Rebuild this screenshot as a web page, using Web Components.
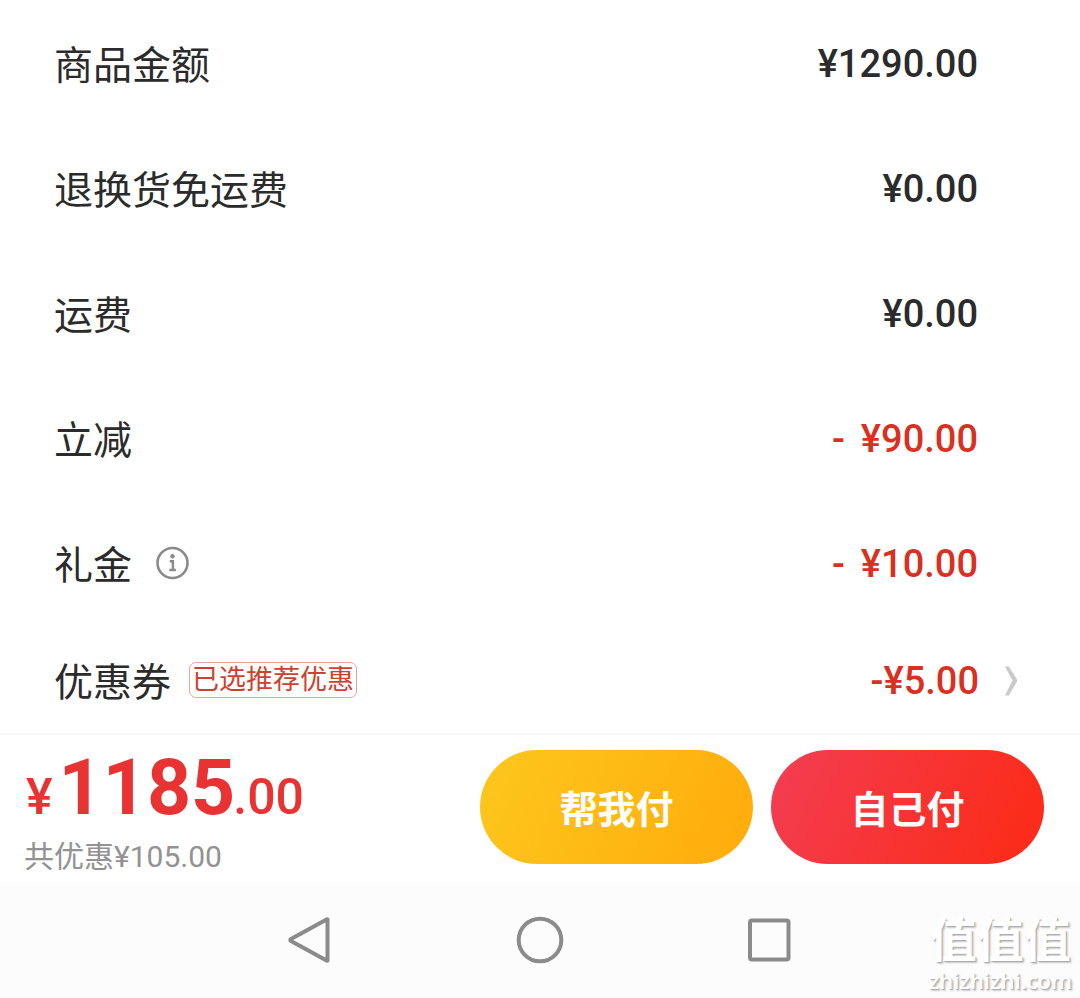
<!DOCTYPE html>
<html lang="zh-CN">
<head>
<meta charset="utf-8">
<meta name="viewport" content="width=device-width, initial-scale=1">
<title>结算</title>
<style>
  body { margin: 0; background: #fff; color: #2b2b2b; font-family: Roboto, "Noto Sans CJK SC", sans-serif; }
</style>
</head>
<body>
<checkout-page></checkout-page>
<script>
function define(name, html) {
  const template = document.createElement('template');
  template.innerHTML = html;
  customElements.define(name, class extends HTMLElement {
    constructor() {
      super();
      this.attachShadow({ mode: 'open' }).append(template.content.cloneNode(true));
    }
  });
}

define('price-row', `
  <style>
    :host { display: flex; align-items: center; height: 125px; padding: 2px 60px 0 54px; box-sizing: border-box; font-size: 39px; line-height: 56px; }
    :host([last]) { height: 108px; padding-top: 4px; }
    .label { display: flex; align-items: center; padding-bottom: 4px; font-family: "Noto Sans CJK SC", sans-serif; }
    .value { display: flex; gap: 16px; margin-left: auto; font-size: 38px; font-weight: 500; }
    :host([discount]) .value { color: #d9301f; }
    .trail { display: flex; justify-content: flex-end; width: 42px; }
    :host([last]) .trail { width: 41px; }
  </style>
  <span class="label"><slot></slot><slot name="extra"></slot></span>
  <span class="value"><slot name="value"></slot></span>
  <span class="trail"><slot name="trail"></slot></span>`);

define('info-button', `
  <style>
    :host { display: block; margin: 2px 0 0 23px; }
    button { display: block; padding: 0; border: 0; background: none; }
    svg { display: block; }
  </style>
  <button type="button" aria-label="礼金说明">
    <svg width="36" height="36" viewBox="0 0 36 36" fill="none" stroke="#8a8a8a">
      <circle cx="17.500" cy="18" r="15" stroke-width="2.6"/>
      <circle cx="17.500" cy="11.3" r="2.2" fill="#8a8a8a" stroke="none"/>
      <path d="M14.800 16.2H17.900V24.5M14.300 25H20.900" stroke-width="2.4"/>
    </svg>
  </button>`);

define('chevron-button', `
  <style>
    :host { display: block; }
    button { display: block; padding: 0; border: 0; background: none; }
    svg { display: block; }
  </style>
  <button type="button" aria-label="选择优惠券">
    <svg width="16" height="32" viewBox="0 0 16 32"><path d="M1 1.500H4.800L13 14.500V16.500L4.800 30.500H1L8.500 15.500Z" fill="#c9c9c9"/></svg>
  </button>`);

define('coupon-tag', `
  <style>
    :host { display: block; padding: 0 2px 4px; margin: 2px 0 0 18px; border: 1px solid #e6a49d; border-radius: 7px; color: #d0402f; font-size: 27px; line-height: 30px; }
  </style>
  <slot></slot>`);

define('pay-button', `
  <style>
    :host { display: block; flex: 0 1 273px; --from: #fdc51c; --to: #ffae0d; }
    :host([kind="self"]) { --from: #f43c4e; --to: #fb2c1b; }
    button { display: block; width: 100%; height: 114px; padding: 0; border: 0; border-radius: 57px; background: linear-gradient(115deg, var(--from) 8%, var(--to) 88%); color: #fff; font: bold 38px/56px "Noto Sans CJK SC", sans-serif; }
  </style>
  <button type="button"><slot></slot></button>`);

define('pay-bar', `
  <style>
    :host { display: flex; align-items: center; gap: 18px; height: 149px; box-sizing: border-box; padding: 0 36px 4px 24px; border-top: 2px solid #f7f7f7; }
    .sum { margin: 6px auto 0 0; white-space: nowrap; }
    .total { display: flex; align-items: baseline; padding-left: 2px; color: #e93333; font-size: 50px; font-weight: 500; line-height: 86px; }
    .total b { margin: 0 -2px 0 6px; font-size: 77px; font-weight: 700; }
    .saved { color: #929292; font-size: 30px; line-height: 34px; }
  </style>
  <div class="sum">
    <div class="total"><span>¥</span><b>1185</b><span>.00</span></div>
    <div class="saved">共优惠¥105.00</div>
  </div>
  <pay-button>帮我付</pay-button>
  <pay-button kind="self">自己付</pay-button>`);

define('system-nav', `
  <style>
    :host { display: grid; grid-template-columns: repeat(3, 1fr); align-items: center; justify-items: center; height: 116px; padding: 0 18%; background: #fcfcfc; }
    button { display: block; padding: 0; border: 0; background: none; }
    svg { display: block; }
  </style>
  <button type="button" aria-label="返回"><svg width="48" height="48" viewBox="0 0 48 48" fill="none" stroke="#8b8b8b" stroke-width="4" stroke-linejoin="round"><path d="M41.500 3.500V44.500Q41.500 45 41 44.800L5 25Q3.500 24 5 23L41 3.200Q41.500 3 41.500 3.500Z"/></svg></button>
  <button type="button" aria-label="主页"><svg width="48" height="48" viewBox="0 0 48 48" fill="none" stroke="#8b8b8b" stroke-width="4"><circle cx="24" cy="24" r="21.300"/></svg></button>
  <button type="button" aria-label="最近任务"><svg width="48" height="48" viewBox="0 0 48 48" fill="none" stroke="#8b8b8b" stroke-width="4"><rect x="4" y="4.500" width="38.500" height="39" rx="2"/></svg></button>`);

define('site-mark', `
  <style>
    :host { display: block; color: #fff; text-align: center; text-shadow: 1px 1px 1px #aaa, 2px 2px 2px #ccc; white-space: nowrap; }
    .name { font: 700 47px/52px Roboto, "Noto Sans CJK SC", sans-serif; }
    .site { font: 600 22px/26px "Open Sans", sans-serif; }
  </style>
  <div class="name">值值值</div>
  <div class="site">zhizhizhi.com</div>`);

define('checkout-page', `
  <style>
    :host { display: block; position: relative; }
    site-mark { position: absolute; right: 8px; bottom: 5px; }
  </style>
  <main>
    <price-row>商品金额<span slot="value">¥1290.00</span></price-row>
    <price-row>退换货免运费<span slot="value">¥0.00</span></price-row>
    <price-row>运费<span slot="value">¥0.00</span></price-row>
    <price-row discount>立减<span slot="value">-</span><span slot="value">¥90.00</span></price-row>
    <price-row discount>礼金<info-button slot="extra"></info-button><span slot="value">-</span><span slot="value">¥10.00</span></price-row>
    <price-row discount last>优惠券<coupon-tag slot="extra">已选推荐优惠</coupon-tag><span slot="value">-¥5.00</span><chevron-button slot="trail"></chevron-button></price-row>
  </main>
  <pay-bar></pay-bar>
  <system-nav></system-nav>
  <site-mark></site-mark>`);
</script>
</body>
</html>
